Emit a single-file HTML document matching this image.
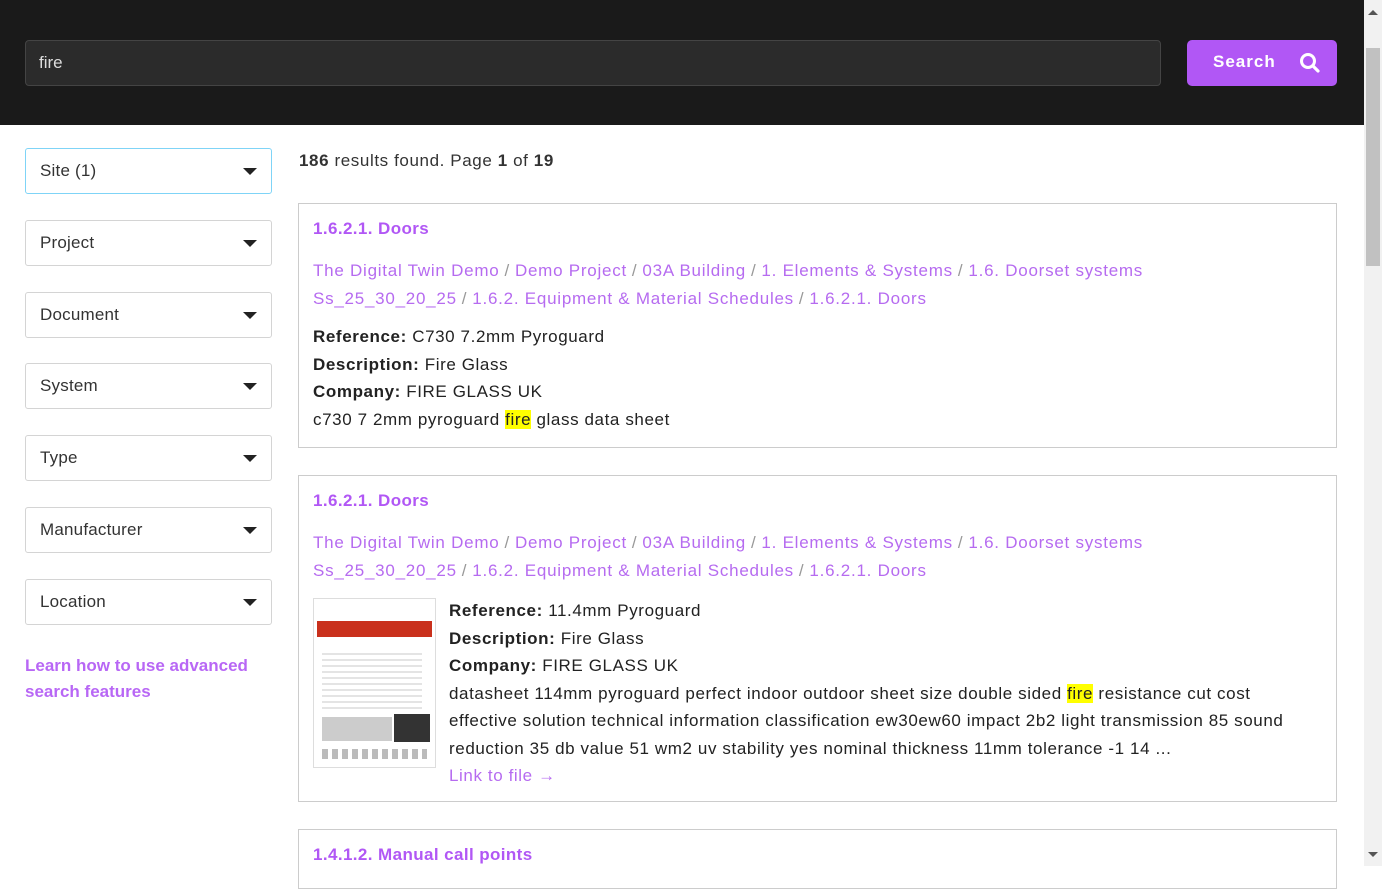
<!DOCTYPE html>
<html><head><meta charset="utf-8"><style>
*{box-sizing:border-box;margin:0;padding:0}
body{width:1382px;height:866px;overflow:hidden;background:#fff;font-family:"Liberation Sans",Arial,sans-serif;color:#222;position:relative;letter-spacing:0.6px}
.top{position:absolute;left:0;top:0;width:1364px;height:125px;background:#1a1a1a}
.inp{position:absolute;left:25px;top:40px;width:1136px;height:46px;background:#2b2b2b;border:1px solid #444;border-radius:4px;color:#ddd;font-size:17px;padding:12px 13px;letter-spacing:0}
.btn{position:absolute;left:1187px;top:40px;width:150px;height:46px;background:#b157f5;border-radius:5px;color:#fff;font-weight:bold;font-size:17px;padding:12px 0 0 26px;letter-spacing:1px}
.btn svg{position:absolute;left:112px;top:12px}
.sb{position:absolute;left:1364px;top:0;width:18px;height:866px;background:#f1f1f1}
.thumb{position:absolute;left:1366px;top:48px;width:14px;height:218px;background:#c1c1c1}
.sel{position:absolute;left:25px;width:247px;height:46px;border:1px solid #d4d4d4;border-radius:3px;font-size:17px;padding:12px 14px;color:#333;letter-spacing:0.2px}
.sel:after{content:"";position:absolute;right:14px;top:19px;border-left:7px solid transparent;border-right:7px solid transparent;border-top:7px solid #222}
.learn{position:absolute;left:25px;top:653px;color:#b157f5;font-size:17px;line-height:26px;font-weight:bold;opacity:.9;letter-spacing:0}
.count{position:absolute;left:299px;top:151px;font-size:17px;color:#333}
.card{position:absolute;left:298px;width:1039px;border:1px solid #ccc;padding:15px 14px}
.h{color:#b157f5;font-weight:bold;font-size:17px;margin-bottom:18px;letter-spacing:0.4px}
.bc{color:#b66bf0;font-size:17px;line-height:28px;letter-spacing:0.75px}
.bc i{font-style:normal;color:#999;margin:0 5px}
.t{font-size:17px;line-height:27.5px;color:#222}
.hl{background:#ffff00}
.lk{color:#b66bf0}
</style></head><body>
<div class="top"></div>
<div class="inp">fire</div>
<div class="btn">Search<svg width="22" height="22" viewBox="0 0 22 22"><circle cx="9" cy="9" r="6.5" fill="none" stroke="#fff" stroke-width="3"/><path d="M14 14l5 5" stroke="#fff" stroke-width="3.2" stroke-linecap="round"/></svg></div>
<div class="sb"></div><div class="thumb"></div>
<div style="position:absolute;left:1368px;top:10px;border-left:5px solid transparent;border-right:5px solid transparent;border-bottom:5px solid #555"></div>
<div style="position:absolute;left:1368px;top:852px;border-left:5px solid transparent;border-right:5px solid transparent;border-top:5px solid #555"></div>

<div class="sel" style="top:148px;border-color:#7fd4f7">Site (1)</div>
<div class="sel" style="top:220px">Project</div>
<div class="sel" style="top:292px">Document</div>
<div class="sel" style="top:363px">System</div>
<div class="sel" style="top:435px">Type</div>
<div class="sel" style="top:507px">Manufacturer</div>
<div class="sel" style="top:579px">Location</div>
<div class="learn">Learn how to use advanced<br>search features</div>

<div class="count"><b>186</b> results found. Page <b>1</b> of <b>19</b></div>

<div class="card" style="top:203px;height:245px">
<div class="h">1.6.2.1. Doors</div>
<div class="bc">The Digital Twin Demo<i>/</i>Demo Project<i>/</i>03A Building<i>/</i>1. Elements &amp; Systems<i>/</i>1.6. Doorset systems<br>Ss_25_30_20_25<i>/</i>1.6.2. Equipment &amp; Material Schedules<i>/</i>1.6.2.1. Doors</div>
<div class="t" style="margin-top:10px"><b>Reference:</b> C730 7.2mm Pyroguard<br><b>Description:</b> Fire Glass<br><b>Company:</b> FIRE GLASS UK<br>c730 7 2mm pyroguard <span class="hl">fire</span> glass data sheet</div>
</div>

<div class="card" style="top:475px;height:327px">
<div class="h">1.6.2.1. Doors</div>
<div class="bc">The Digital Twin Demo<i>/</i>Demo Project<i>/</i>03A Building<i>/</i>1. Elements &amp; Systems<i>/</i>1.6. Doorset systems<br>Ss_25_30_20_25<i>/</i>1.6.2. Equipment &amp; Material Schedules<i>/</i>1.6.2.1. Doors</div>
<div style="position:absolute;left:14px;top:122px;width:123px;height:170px;border:1px solid #ddd;background:#fff">
<div style="position:absolute;left:3px;top:22px;width:115px;height:16px;background:#c9301c"></div>
<div style="position:absolute;left:8px;top:50px;width:100px;height:60px;background:repeating-linear-gradient(#fff 0 4px,#e4e4e4 4px 6px)"></div>
<div style="position:absolute;left:8px;top:118px;width:70px;height:24px;background:#ccc"></div>
<div style="position:absolute;left:80px;top:115px;width:36px;height:28px;background:#333"></div>
<div style="position:absolute;left:8px;top:150px;width:105px;height:10px;background:repeating-linear-gradient(90deg,#bbb 0 6px,#fff 6px 10px)"></div>
</div>
<div class="t" style="margin-top:12px;margin-left:136px"><b>Reference:</b> 11.4mm Pyroguard<br><b>Description:</b> Fire Glass<br><b>Company:</b> FIRE GLASS UK<br>datasheet 114mm pyroguard perfect indoor outdoor sheet size double sided <span class="hl">fire</span> resistance cut cost<br>effective solution technical information classification ew30ew60 impact 2b2 light transmission 85 sound<br>reduction 35 db value 51 wm2 uv stability yes nominal thickness 11mm tolerance -1 14 ...<br><span class="lk">Link to file →</span></div>
</div>

<div class="card" style="top:829px;height:60px">
<div class="h">1.4.1.2. Manual call points</div>
</div>
</body></html>
